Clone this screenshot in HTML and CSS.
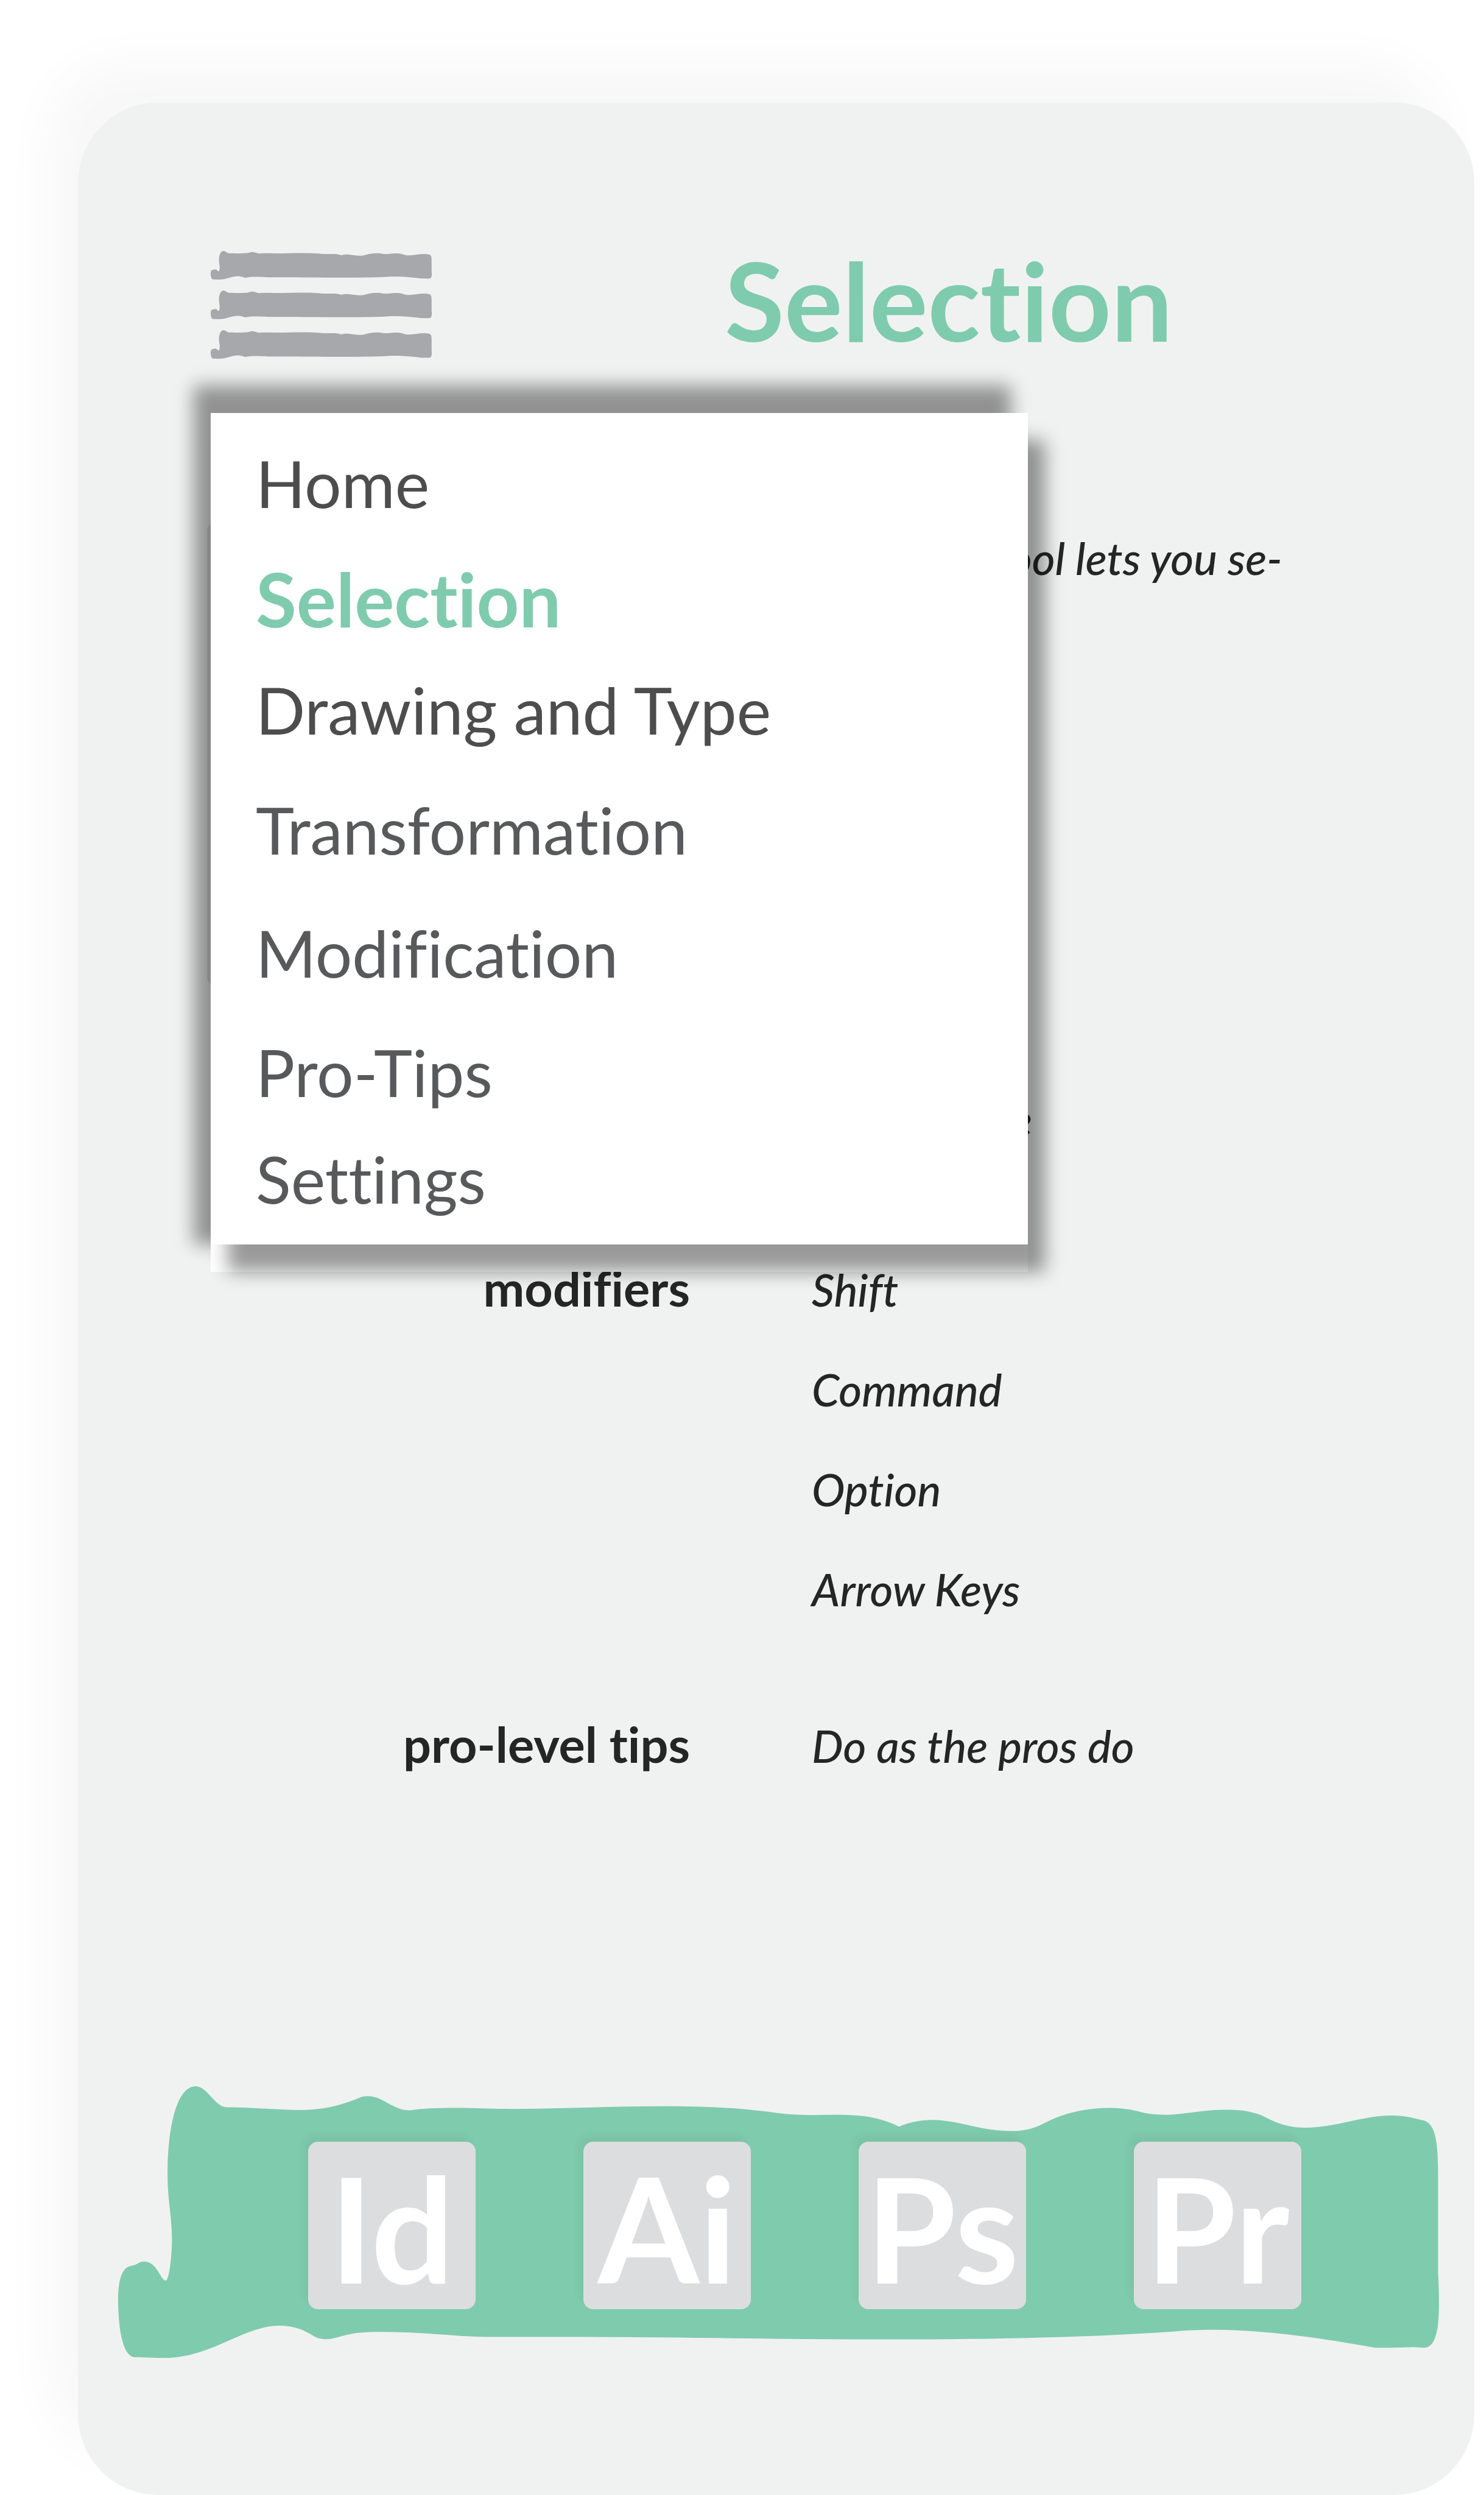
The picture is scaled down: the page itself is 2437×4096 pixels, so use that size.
FILE: index.html
```html
<!DOCTYPE html>
<html lang="en">
<head>
<meta charset="utf-8">
<title>Selection</title>
<link rel="stylesheet" href="styles.css">
</head>
<body>
<svg class="defs" aria-hidden="true">
  <symbol id="brush" viewBox="20 88 1497 983" preserveAspectRatio="none">
    <path d="M108 88C121 88 130 164 143 164C170 163 200 174 228 174C256 172 275 155 296 126C304 121 311 124 318 136C330 155 338 175 350 175C366 168 380 166 400 166C425 166 440 170 468 170C520 170 580 160 640 160C700 160 735 170 768 185C800 199 830 186 858 194C878 199 893 215 905 234C920 213 937 205 957 213C980 221 1000 249 1034 250C1050 250 1062 235 1072 218C1092 185 1118 166 1144 166C1163 167 1175 177 1184 185C1198 193 1212 193 1228 186C1245 180 1260 172 1278 173C1298 173 1312 185 1324 206C1338 228 1350 238 1366 238C1400 238 1430 194 1464 194C1478 194 1488 203 1500 212C1513 225 1516 290 1516 400V760C1518 900 1519 1034 1500 1034C1496 1034 1492 1031 1486 1032C1475 1034 1465 1034 1445 1034C1390 1003 1325 969 1260 969C1245 969 1230 971 1218 975C1110 998 1010 1004 890 1004C760 1004 640 994 500 995H436C400 993 365 977 318 977C302 977 290 980 281 986C271 993 264 1003 255 1003C246 1003 242 993 237 983C228 966 217 954 203 954C162 954 126 1071 72 1071C60 1071 50 1068 38 1068C24 1061 20 950 20 860C20 800 23 746 34 738C44 733 42 722 50 722C64 722 68 791 74 791C78 791 81 700 81 640C81 560 76 500 76 410C76 240 86 88 108 88Z"/>
  </symbol>
</svg>
<main class="card">
  <header class="top">
    <button class="burger" type="button" aria-label="Menu" aria-expanded="true">
      <svg><use href="#brush"/></svg>
      <svg><use href="#brush"/></svg>
      <svg><use href="#brush"/></svg>
    </button>
    <h1>Selection</h1>
    <nav class="menu" aria-label="Main">
      <ul>
        <li><a href="#home">Home</a></li>
        <li><a class="current" href="#selection" aria-current="page">Selection</a></li>
        <li><a href="#drawing">Drawing and Type</a></li>
        <li class="soft"><a href="#transformation">Transformation</a></li>
        <li class="soft"><a href="#modification">Modification</a></li>
        <li class="soft"><a href="#pro-tips">Pro-Tips</a></li>
        <li class="soft"><a href="#settings">Settings</a></li>
      </ul>
    </nav>
  </header>
  <dl class="facts">
    <dt class="preview"></dt><dd class="about">Selection Tool lets you se-</dd>
    <dt></dt><dd class="action">Tap to use</dd>
    <dt>modifiers</dt>
    <dd class="keys"><span>Shift</span><span>Command</span><span>Option</span><span>Arrow Keys</span></dd>
    <dt>pro-level tips</dt><dd>Do as the pros do</dd>
  </dl>
  <footer class="apps">
    <svg class="stroke" aria-hidden="true"><use href="#brush"/></svg>
    <a href="#id">Id</a>
    <a href="#ai">Ai</a>
    <a href="#ps">Ps</a>
    <a href="#pr">Pr</a>
  </footer>
</main>
</body>
</html>
```
FILE: styles.css
```css
* { box-sizing: border-box; }
body {
  margin: 0;
  padding: 168px 16px 0 128px;
  background: #fff;
  color: #252525;
  font-family: Lato, "Open Sans", sans-serif;
  font-variant-ligatures: none;
}
.defs { position: absolute; width: 0; height: 0; }
.card {
  display: flex;
  flex-direction: column;
  min-height: calc(100vh - 168px);
  padding: 244px 58px 225px 66px;
  border-radius: 132px;
  background: #f0f2f1;
  box-shadow: -52px -68px 84px rgba(0, 0, 0, 0.03);
}
.top {
  position: relative;
  display: flex;
  align-items: flex-start;
  height: 178px;
  padding-left: 152px;
}
.burger {
  display: flex;
  flex-direction: column;
  gap: 18px;
  width: 363px;
  padding: 0;
  border: 0;
  background: none;
  color: #a7a8ac;
}
svg { fill: currentColor; }
.burger svg { width: 100%; height: 47px; }
h1 {
  margin: 0 0 0 481px;
  color: #7fcbae;
  font-size: 179px;
  line-height: 160px;
}
.menu {
  position: absolute;
  top: 266px;
  left: 152px;
  width: 1342px;
  padding-bottom: 45px;
  background: #fff;
  box-shadow: -28px -45px 28px rgba(0, 0, 0, 0.4);
}
.menu ul {
  display: grid;
  grid-template-rows: 230px 150px 214px 180px 224px 168px 182px;
  height: 1365px;
  margin: 0;
  padding: 0 0 0 74px;
  list-style: none;
  background: #fff;
  box-shadow: 28px 45px 28px rgba(0, 0, 0, 0.4);
}
.menu li { display: flex; align-items: center; }
.menu a { color: #4d4d4e; font-size: 107px; line-height: 128px; text-decoration: none; }
.menu .soft a { color: #58595b; }
.menu .current { color: #7fcbae; font-size: 122px; font-weight: 700; }
.facts {
  display: grid;
  grid-template-columns: 939px 1fr;
  align-items: baseline;
  column-gap: 200px;
  margin: 284px 0 0;
  font-size: 73px;
  line-height: 84px;
}
dt { font-size: 81px; font-weight: 700; text-align: right; }
dd { margin: 0; font-style: italic; font-weight: 500; }
.preview {
  align-self: start;
  width: 764px;
  height: 764px;
  margin: -18px 0 0 146px;
  border-radius: 16px;
  background: #dcddde;
}
.about { padding-bottom: 838px; }
.action { width: 362px; padding-bottom: 192px; text-align: right; }
.keys { display: grid; gap: 80px; padding-bottom: 170px; }
.apps {
  position: relative;
  display: flex;
  gap: 177px;
  height: 446px;
  margin-top: auto;
  padding: 91px 0 0 312px;
}
.stroke { position: absolute; inset: 0; width: 100%; height: 100%; color: #7fcbae; }
.apps a {
  position: relative;
  width: 275px;
  height: 275px;
  border-radius: 16px;
  background: #dcddde;
  box-shadow: -8px -12px 12px rgba(0, 0, 0, 0.04);
  color: #fff;
  font-size: 240px;
  font-weight: 700;
  line-height: 280px;
  text-align: center;
  text-decoration: none;
}
```
